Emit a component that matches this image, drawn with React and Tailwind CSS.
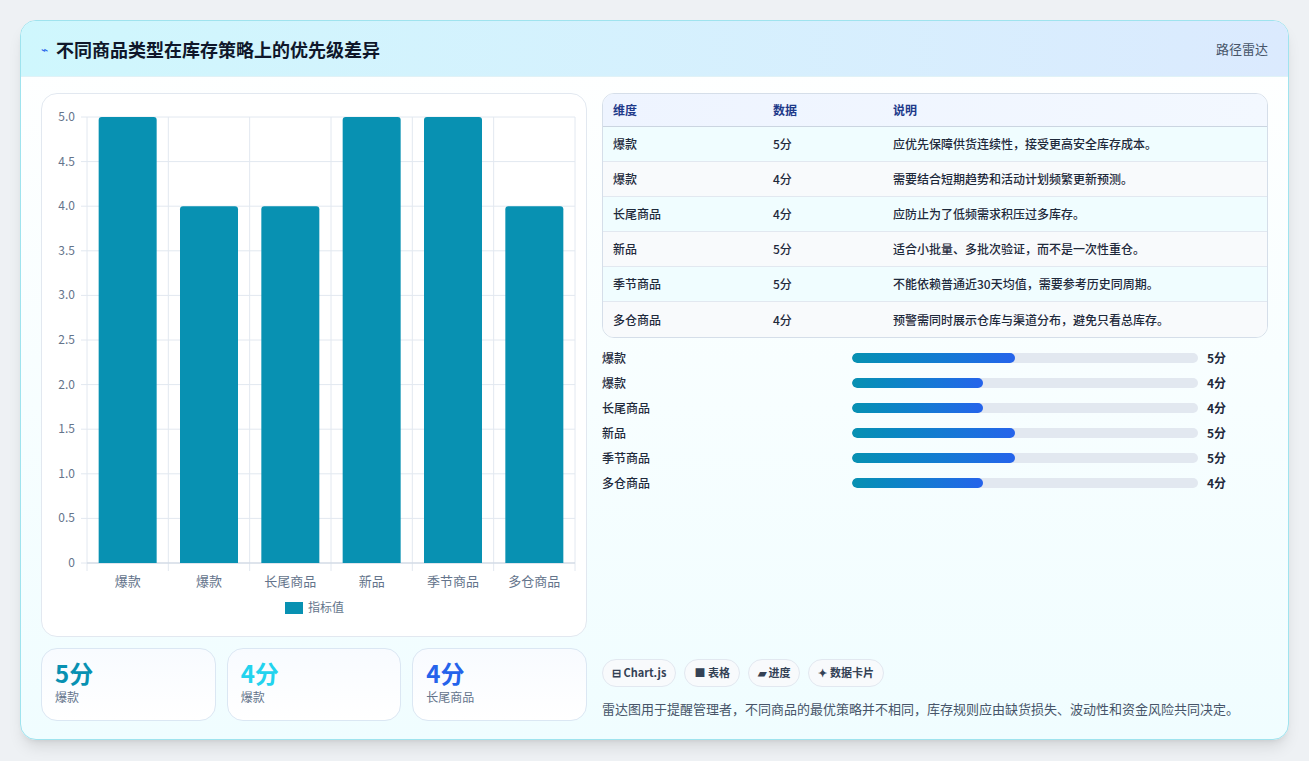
import React from "react";

const rows = [
  { name: "爆款", score: 5, note: "应优先保障供货连续性，接受更高安全库存成本。" },
  { name: "爆款", score: 4, note: "需要结合短期趋势和活动计划频繁更新预测。" },
  { name: "长尾商品", score: 4, note: "应防止为了低频需求积压过多库存。" },
  { name: "新品", score: 5, note: "适合小批量、多批次验证，而不是一次性重仓。" },
  { name: "季节商品", score: 5, note: "不能依赖普通近30天均值，需要参考历史同周期。" },
  { name: "多仓商品", score: 4, note: "预警需同时展示仓库与渠道分布，避免只看总库存。" },
];

const font = { fontFamily: '"Noto Sans CJK SC", "Noto Sans", sans-serif' };

function BarChart() {
  const left = 45, right = 533, top = 23, bottom = 469;
  const h = bottom - top;
  const step = (right - left) / 6;
  const ticks = [0, 0.5, 1, 1.5, 2, 2.5, 3, 3.5, 4, 4.5, 5];
  return (
    <svg width="546" height="543" className="block">
      {ticks.map((t) => {
        const y = bottom - (t / 5) * h;
        return (
          <g key={t}>
            <line x1={left - 6} x2={right} y1={y} y2={y} stroke="#e2e8f0" />
            <text x={left - 12} y={y + 4} textAnchor="end" fontSize="12" fill="#64748b" style={font}>
              {t === 0 ? "0" : t.toFixed(1)}
            </text>
          </g>
        );
      })}
      {Array.from({ length: 7 }).map((_, i) => (
        <line key={i} x1={left + i * step} x2={left + i * step} y1={top} y2={bottom + 8} stroke="#e2e8f0" />
      ))}
      <line x1={left} x2={right} y1={bottom} y2={bottom} stroke="#cbd5e1" />
      {rows.map((r, i) => {
        const bh = (r.score / 5) * h;
        const x = left + i * step + (step - 58) / 2;
        return (
          <g key={i}>
            <path
              d={`M${x} ${bottom} V${bottom - bh + 3} Q${x} ${bottom - bh} ${x + 3} ${bottom - bh} H${x + 55} Q${x + 58} ${bottom - bh} ${x + 58} ${bottom - bh + 3} V${bottom}Z`}
              fill="#0891b2"
            />
            <text x={left + i * step + step / 2} y={bottom + 23} textAnchor="middle" fontSize="13" fill="#64748b" style={font}>
              {r.name}
            </text>
          </g>
        );
      })}
      <rect x="243" y="508" width="18" height="12" fill="#0891b2" />
      <text x="266" y="518" fontSize="12" fill="#64748b" style={font}>指标值</text>
    </svg>
  );
}

export default function App() {
  return (
    <div className="min-h-screen bg-[#eef1f4] pt-5 pb-5 px-5" style={font}>
      <div className="rounded-2xl border border-[#9fe3ee] bg-gradient-to-b from-white to-[#f0fdff] overflow-hidden shadow-lg">
        <div className="h-14 flex items-center justify-between px-5 bg-gradient-to-r from-[#cff7fd] to-[#dbeafe] border-b border-[#e0f2f7]">
          <div className="flex items-center gap-2">
            <span className="text-[#2563eb] text-xs">⌁</span>
            <h1 className="text-lg font-bold text-[#0f172a]">不同商品类型在库存策略上的优先级差异</h1>
          </div>
          <span className="text-[13px] text-[#475569]">路径雷达</span>
        </div>
        <div className="grid grid-cols-[546px_1fr] gap-[15px] px-5 pt-4 pb-[18px]">
          <div className="flex flex-col gap-[11px]">
            <div className="rounded-2xl border border-[#e2e8f0] bg-white h-[544px]">
              <BarChart />
            </div>
            <div className="grid grid-cols-3 gap-[11px]">
              {[
                ["5分", "爆款", "text-[#0891b2]"],
                ["4分", "爆款", "text-[#22d3ee]"],
                ["4分", "长尾商品", "text-[#2563eb]"],
              ].map(([v, l, c], i) => (
                <div key={i} className="rounded-2xl border border-[#dbe7f3] bg-gradient-to-b from-[#f8fbff] to-white h-[73px] px-[13px] pt-2">
                  <div className={`text-2xl font-bold leading-8 ${c}`}>{v}</div>
                  <div className="text-xs text-[#64748b]">{l}</div>
                </div>
              ))}
            </div>
          </div>
          <div className="flex flex-col">
            <div className="rounded-xl border border-[#d5dee9] overflow-hidden">
              <div className="grid grid-cols-[160px_120px_1fr] h-[33px] items-center px-[10px] bg-gradient-to-r from-[#eef4ff] to-[#f3f8ff] border-b border-[#cbd5e1] text-xs font-bold text-[#1e3a8a]">
                <span>维度</span><span>数据</span><span>说明</span>
              </div>
              {rows.map((r, i) => (
                <div key={i} className={`grid grid-cols-[160px_120px_1fr] h-[35px] items-center px-[10px] text-xs font-medium text-[#1e293b] ${i < 5 ? "border-b border-[#e2e8f0]" : ""} ${i % 2 ? "bg-[#f8fafc]" : "bg-[#f0fdff]"}`}>
                  <span>{r.name}</span><span>{r.score}分</span><span>{r.note}</span>
                </div>
              ))}
            </div>
            <div className="flex flex-col gap-[9px] mt-[12px]">
              {rows.map((r, i) => (
                <div key={i} className="flex items-center h-4 text-xs font-medium text-[#1e293b]">
                  <span className="w-[250px]">{r.name}</span>
                  <div className="w-[346px] h-[10px] rounded-full bg-[#e2e8f0] overflow-hidden">
                    <div className={`h-full rounded-full bg-gradient-to-r from-[#0891b2] to-[#2563eb] ${r.score === 5 ? "w-[47%]" : "w-[38%]"}`} />
                  </div>
                  <span className="ml-[9px] font-bold">{r.score}分</span>
                </div>
              ))}
            </div>
            <div className="flex-1" />
            <div className="flex gap-2 text-[11px] font-bold text-[#334155]">
              {["⊟ Chart.js", "■ 表格", "▰ 进度", "✦ 数据卡片"].map((t) => (
                <span key={t} className="px-[9px] h-7 flex items-center rounded-full border border-[#e2e8f0] bg-[#f8fafc]">{t}</span>
              ))}
            </div>
            <p className="mt-[12px] text-[13px] text-[#475569] mb-[3px]">雷达图用于提醒管理者，不同商品的最优策略并不相同，库存规则应由缺货损失、波动性和资金风险共同决定。</p>
          </div>
        </div>
      </div>
    </div>
  );
}
